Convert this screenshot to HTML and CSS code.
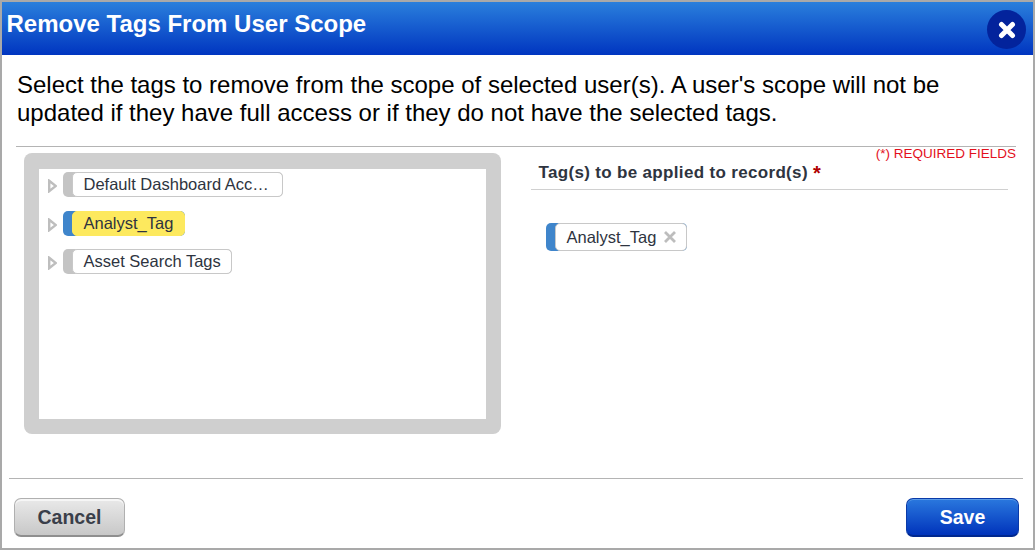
FILE: index.html
```html
<!DOCTYPE html>
<html lang="en">
<head>
<meta charset="utf-8">
<title>Remove Tags From User Scope</title>
<link rel="stylesheet" href="styles.css">
</head>
<body>
<div class="dialog">
  <header class="head">
    <h1 class="title">Remove Tags From User Scope</h1>
    <button class="close" aria-label="Close">
      <svg width="18" height="18" viewBox="0 0 18 18"><path d="M3.5 3.5L14.5 14.5M14.5 3.5L3.5 14.5" stroke="#fff" stroke-width="5" stroke-linecap="round"/></svg>
    </button>
  </header>
  <p class="intro">Select the tags to remove from the scope of selected user(s). A user's scope will not be updated if they have full access or if they do not have the selected tags.</p>
  <div class="rule-top"></div>
  <main class="content">
    <section class="tree-frame">
      <div class="tree">
        <div class="row">
          <svg class="arrow" width="9" height="14" viewBox="0 0 9 14"><path d="M1.2 1.8L7.8 7L1.2 12.2Z" fill="#fff" stroke="#bebebe" stroke-width="2.4"/></svg>
          <span class="chip chip-grey chip-wide"><span class="chip-body">Default Dashboard Acc…</span></span>
        </div>
        <div class="row">
          <svg class="arrow" width="9" height="14" viewBox="0 0 9 14"><path d="M1.2 1.8L7.8 7L1.2 12.2Z" fill="#fff" stroke="#bebebe" stroke-width="2.4"/></svg>
          <span class="chip chip-blue chip-hl"><span class="chip-body">Analyst_Tag</span></span>
        </div>
        <div class="row">
          <svg class="arrow" width="9" height="14" viewBox="0 0 9 14"><path d="M1.2 1.8L7.8 7L1.2 12.2Z" fill="#fff" stroke="#bebebe" stroke-width="2.4"/></svg>
          <span class="chip chip-grey"><span class="chip-body">Asset Search Tags</span></span>
        </div>
      </div>
    </section>
    <section class="side">
      <div class="required">(*) REQUIRED FIELDS</div>
      <div class="side-head">Tag(s) to be applied to record(s) <span class="star">*</span></div>
      <div class="picked">
        <span class="chip chip-blue chip-sel"><span class="chip-body">Analyst_Tag
          <svg class="remove" width="14" height="14" viewBox="0 0 14 14"><path d="M2 2L12 12M12 2L2 12" stroke="#bdbdbd" stroke-width="2.8"/></svg>
        </span></span>
      </div>
    </section>
  </main>
  <footer class="foot">
    <button class="btn btn-cancel">Cancel</button>
    <button class="btn btn-save">Save</button>
  </footer>
</div>
</body>
</html>
```
FILE: styles.css
```css
* { box-sizing: border-box; }
html, body { margin: 0; padding: 0; }
body { width: 1035px; height: 550px; overflow: hidden; background: #fff; font-family: "Liberation Sans", Arial, sans-serif; }
.dialog { width: 1035px; height: 550px; border: 2px solid #a9a9a9; display: flex; flex-direction: column; background: #fff; }
.head { height: 53px; flex: none; display: flex; justify-content: space-between; background: linear-gradient(#2a7fdc, #0035c0); padding: 0 7px 0 4.5px; }
.title { margin: 8px 0 0; font-size: 24px; line-height: 28px; font-weight: 700; color: #fff; }
.close { width: 39px; height: 39px; margin-top: 8px; border: 0; padding: 0; border-radius: 50%; background: #03239c; display: flex; align-items: center; justify-content: center; }
.intro { margin: 16px 60px 0 15px; font-size: 24px; line-height: 28px; color: #000; height: 56px; flex: none; }
.rule-top { height: 1px; flex: none; margin: 19px 17px 0 14px; background: #b4b4b4; }
.content { flex: 1; display: flex; padding: 6px 0 0 22px; min-height: 0; }
.tree-frame { width: 477px; height: 281px; flex: none; background: #cfcfcf; border-radius: 8px; padding: 16px 15px 15px; }
.tree { height: 100%; background: #fff; padding: 3px 0 0 9px; display: flex; flex-direction: column; gap: 13.5px; }
.row { display: flex; align-items: center; gap: 6px; height: 25px; }
.arrow { flex: none; margin-top: 3px; }
.chip { display: inline-flex; height: 25px; padding-left: 9px; border-radius: 5px; font-size: 16.5px; color: #2e3440; white-space: nowrap; }
.chip-body { display: flex; align-items: center; gap: 8px; flex: 1; height: 100%; padding: 0 10.5px; background: #fff; border: 1px solid #c8c8c8; border-radius: 5px; }
.chip-grey { background: #c4c4c4; }
.chip-blue { background: #3f85cb; }
.chip-wide { width: 220px; }
.chip-hl .chip-body { background: #fde95e; border-color: #fde95e; }
.side { width: 492px; margin-left: 30px; position: relative; }
.required { position: absolute; top: -6px; right: 7px; font-size: 13.5px; line-height: 14px; color: #e3101c; }
.side-head { margin-top: 9px; height: 28px; padding-left: 7.5px; width: 477px; border-bottom: 1px solid #d0d0d0; font-size: 17px; line-height: 22px; font-weight: 700; color: #2e3440; white-space: nowrap; letter-spacing: 0.33px; }
.star { color: #b00000; font-size: 20px; line-height: 20px; vertical-align: -2px; }
.picked { padding: 33px 0 0 15px; }
.chip-sel { height: 28px; }
.chip-sel .chip-body { padding: 0 9px 0 10.5px; gap: 7px; }
.foot { flex: none; margin: 0 10px 0 7px; height: 70px; border-top: 1px solid #b4b4b4; display: flex; justify-content: space-between; align-items: flex-start; padding: 19px 4px 0 5px; }
.btn { width: 111px; height: 39px; border-radius: 7px; font-family: inherit; font-size: 19.5px; font-weight: 700; padding: 0; }
.btn-cancel { background: linear-gradient(#e9e9e9, #c8c8c8); border: 1px solid #b0b0b0; border-bottom: 2px solid #8f8f8f; box-shadow: inset 0 2px 0 #f6f6f6; color: #3a3f4a; }
.btn-save { width: 113px; background: linear-gradient(#2a78de, #0033bb); border: 1px solid #0a3aa8; border-bottom: 2px solid #00288f; box-shadow: inset 0 1px 0 #5c9be8; color: #fff; }
```
